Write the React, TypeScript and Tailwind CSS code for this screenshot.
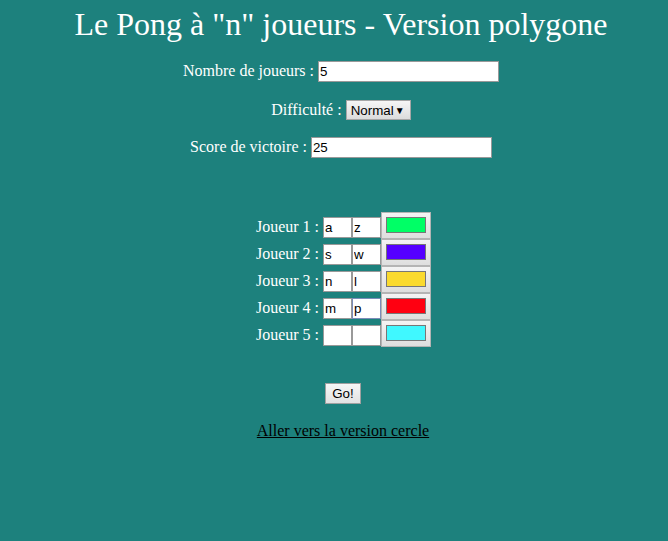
import React from "react";

const inputCls =
  "inline-block align-baseline h-[21px] border border-[#999999] bg-white px-[1px] text-[13.33px] text-black font-['Liberation_Sans',Arial,sans-serif] leading-[15px] outline-none";

function ColorBtn({ color }: { color: string }) {
  return (
    <div className="flex h-[27px] w-[50px] items-center justify-center border border-[#b4b4b4] bg-gradient-to-b from-[#f4f4f4] to-[#dedede] pb-[1px]">
      <div className="h-[16px] w-[40px] border border-[#777777]" style={{ background: color }} />
    </div>
  );
}

const players = [
  { n: 1, a: "a", b: "z", c: "#00ff66" },
  { n: 2, a: "s", b: "w", c: "#5500ff" },
  { n: 3, a: "n", b: "l", c: "#fada2e" },
  { n: 4, a: "m", b: "p", c: "#ff0011" },
  { n: 5, a: "", b: "", c: "#40f8ff" },
];

export default function App() {
  return (
    <div className="min-h-[541px] w-full bg-[#1d817d] pl-[14px] font-['Liberation_Serif','Times_New_Roman',serif] text-[16px] text-white">
      <h1 className="pt-[6px] text-center text-[32px] font-normal leading-[37px]">
        Le Pong à "n" joueurs - Version polygone
      </h1>

      <div className="mt-[18px] text-center leading-[18px]">
        Nombre de joueurs :{" "}
        <input className={inputCls + " w-[181px]"} defaultValue="5" readOnly />
      </div>

      <div className="mt-[18px] text-center leading-[18px]">
        Difficulté :{" "}
        <span className="inline-flex h-[20px] w-[65px] items-center justify-between border border-[#a6a6a6] bg-gradient-to-b from-[#f6f6f6] to-[#dcdcdc] pl-[4px] pr-[5px] align-baseline text-[13.33px] leading-[15px] text-black font-['Liberation_Sans',Arial,sans-serif]">
          <span>Normal</span>
          <span className="text-[10px]">▼</span>
        </span>
      </div>

      <div className="mt-[17px] text-center leading-[18px]">
        Score de victoire :{" "}
        <input className={inputCls + " w-[181px]"} defaultValue="25" readOnly />
      </div>

      <div className="mt-[54px] flex flex-col items-center pl-[5px]">
        {players.map((p) => (
          <div key={p.n} className="flex h-[27px] items-end">
            <div className="mb-[1px] whitespace-nowrap leading-[18px]">
              Joueur {p.n} :{" "}
              <input
                className={inputCls + " w-[29px]"}
                defaultValue={p.a}
                readOnly
              />
              <input
                className={
                  inputCls +
                  " w-[29px]" +
                  (p.n === 4 ? " !border-[#7b8cb8]" : "")
                }
                defaultValue={p.b}
                readOnly
              />
            </div>
            <ColorBtn color={p.c} />
          </div>
        ))}
      </div>

      <div className="mt-[36px] flex justify-center pl-[4px]">
        <button className="h-[21px] w-[36px] border border-[#a0a0a0] bg-gradient-to-b from-[#f6f6f6] to-[#e2e2e2] text-[13.33px] leading-[15px] text-black font-['Liberation_Sans',Arial,sans-serif]">
          Go!
        </button>
      </div>

      <div className="mt-[18px] text-center leading-[18px] pl-[4px]">
        <a href="#" className="text-black underline">
          Aller vers la version cercle
        </a>
      </div>
    </div>
  );
}
